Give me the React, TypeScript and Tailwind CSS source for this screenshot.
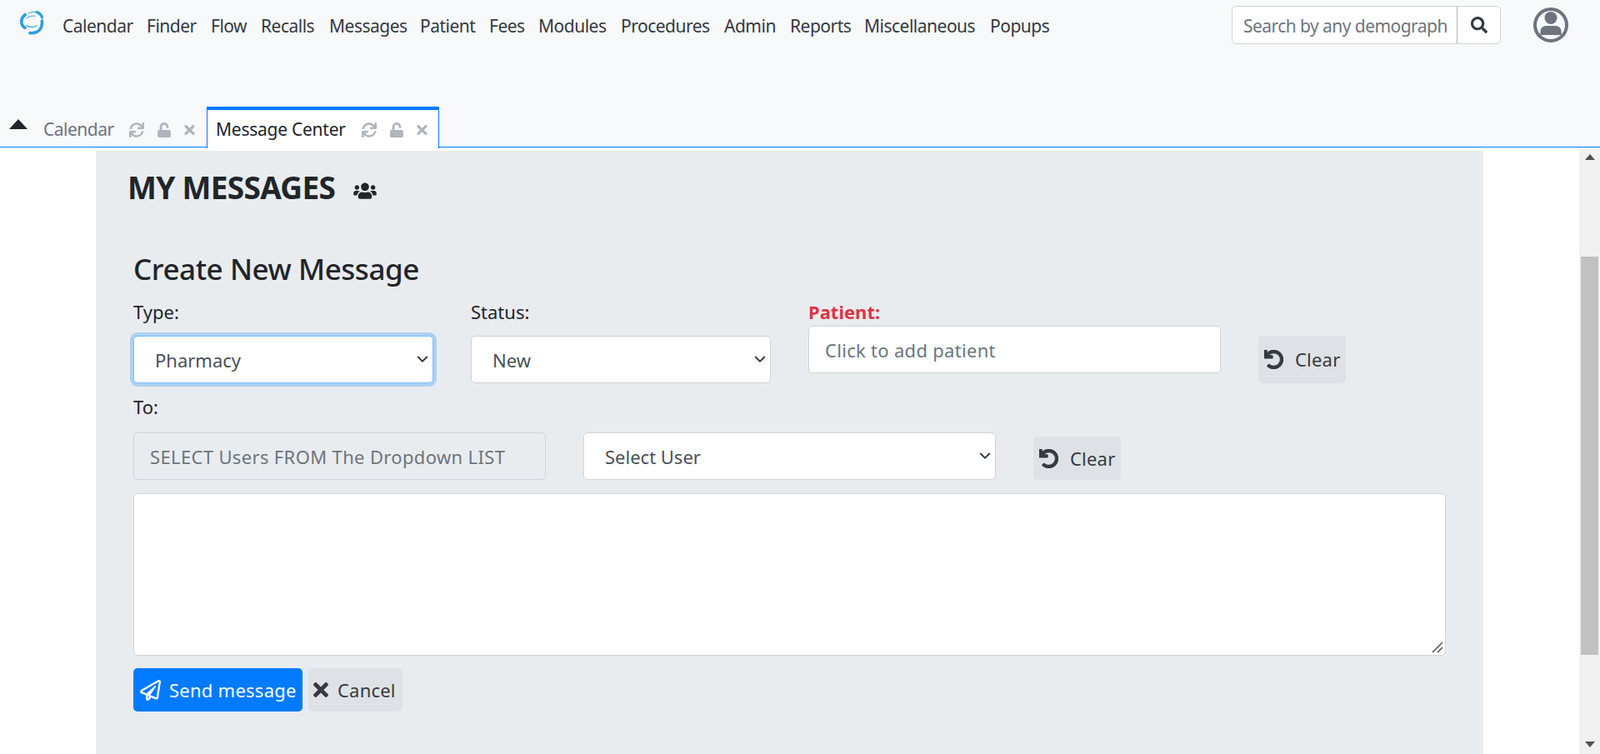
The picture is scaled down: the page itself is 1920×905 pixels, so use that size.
import React from "react";
import { FaSync, FaUnlock, FaTimes, FaUsers, FaSearch, FaRegPaperPlane, FaUndo } from "react-icons/fa";

const navItems = [
  ["Calendar", "w-[101px]"],
  ["Finder", "w-[77px]"],
  ["Flow", "w-[60px]"],
  ["Recalls", "w-[82px]"],
  ["Messages", "w-[109px]"],
  ["Patient", "w-[83px]"],
  ["Fees", "w-[59px]"],
  ["Modules", "w-[99px]"],
  ["Procedures", "w-[124px]"],
  ["Admin", "w-[79px]"],
  ["Reports", "w-[89px]"],
  ["Miscellaneous", "w-[151px]"],
  ["Popups", "w-[72px]"],
];

function TabIcons() {
  return (
    <div className="flex items-center text-[#adb5bd]">
      <FaSync className="w-[18px] h-[18px]" />
      <FaUnlock className="w-[18px] h-[18px] ml-[15px]" />
      <FaTimes className="w-[13px] h-[18px] ml-[15px]" />
    </div>
  );
}

function ClearButton({ extra }: { extra: string }) {
  return (
    <button className={`flex items-center gap-[14px] pl-[7px] w-[105px] rounded-[5px] bg-[#dee2e6] text-[#343a40] text-[22px] tracking-[0.2px] ${extra}`}>
      <FaUndo className="w-[23px] h-[23px] text-[#343a40]" stroke="currentColor" strokeWidth={24} />
      Clear
    </button>
  );
}

function Select({ label, width, focus }: { label: string; width: string; focus?: boolean }) {
  return (
    <div className={`relative ${width}`}>
      <select
        className={`block w-full h-[57px] pl-[25px] pr-[24px] pt-[2px] appearance-none bg-white rounded-[5px] border text-[22px] text-[#495057] outline-none ${
          focus ? "border-[#80bdff] shadow-[0_0_0_4px_rgba(0,123,255,0.25)]" : "border-[#ced4da]"
        }`}
      >
        <option>{label}</option>
      </select>
      <svg viewBox="0 0 14 8" className="absolute right-[6px] top-[24px] w-[14px] h-[8px] pointer-events-none" fill="none" stroke="#343a40" strokeWidth="2">
        <path d="M1.2 1 L7 6.6 L12.8 1" />
      </svg>
    </div>
  );
}

export default function App() {
  return (
    <div className="h-[905px] w-full overflow-hidden flex flex-col bg-white font-['Noto_Sans','Open_Sans',sans-serif] text-[#212529]">
      <header className="h-[177px] shrink-0 bg-[#f8f9fa] border-b border-[#007bff] flex flex-col justify-between">
        <div className="flex items-start pt-[7px] pl-[23px] pr-[38px]">
          <svg viewBox="0 0 32 32" className="w-[32px] h-[32px] mt-[4px] mr-[20px] shrink-0" fill="none" stroke="#2f9fd8" strokeLinecap="round">
            <path d="M7 6.7 C3.5 9.5 2.4 13.5 3 17 C3.5 19.5 5 21.5 7 22.3" strokeWidth="3.8" />
            <path d="M10.5 5 C13 3.8 16 3.2 19 3.2" strokeWidth="1" />
            <path d="M21 3.6 C24 4.4 26.6 6.8 27.6 10" strokeWidth="3.2" />
            <path d="M27.4 14 C27.8 19 26.4 23 24 25.5 C21.5 27.8 17 29 13 28.6" strokeWidth="3.6" />
            <path d="M9 19.5 C13 22.5 18 22 21 20" strokeWidth="1.2" />
            <path d="M8.7 11 C11 8.6 15 7.6 19 8.2" strokeWidth="1" />
          </svg>
          <nav className="flex items-center h-[50px] text-[21px] tracking-[-0.5px] text-[#343a40]">
            {navItems.map(([n, w]) => (
              <span key={n} className={`${w} whitespace-nowrap`}>{n}</span>
            ))}
          </nav>
          <div className="ml-auto flex items-center">
            <div className="flex h-[46px] w-[323px] rounded-[5px] border border-[#ced4da] bg-white overflow-hidden">
              <input placeholder="Search by any demographics" className="w-[269px] h-full pl-[13px] pr-[12px] pt-[2px] text-[21px] tracking-[-0.55px] placeholder:text-[#6c757d] outline-none" />
              <div className="flex-1 border-l border-[#adb5bd] flex items-center justify-center text-[#343a40]">
                <FaSearch className="w-[20px] h-[20px]" />
              </div>
            </div>
            <svg viewBox="0 0 42 42" className="w-[42px] h-[42px] ml-[39px]">
              <circle cx="21" cy="21" r="19" fill="#f8f9fa" stroke="#6c757d" strokeWidth="4" />
              <circle cx="21" cy="12.5" r="7.5" fill="#6c757d" />
              <path d="M8.5 29 C8.5 24 12 22 16 22 H26 C30 22 33.5 24 33.5 29 V33 H8.5 Z" fill="#6c757d" />
            </svg>
          </div>
        </div>
        <div className="flex items-end h-[50px] -mb-[1px]">
          <svg viewBox="0 0 22 12" className="w-[22px] h-[12px] ml-[11px] mb-[22px]">
            <path d="M11 0 L22 12 H0 Z" fill="#212529" />
          </svg>
          <div className="flex items-center h-[43px] ml-[19px] w-[196px] text-[#6c757d] text-[21px] tracking-[-0.5px]">
            <span className="w-[103px]">Calendar</span>
            <TabIcons />
          </div>
          <div className="flex items-center h-[50px] w-[279px] bg-white border-x border-b-0 border-[#007bff] border-t-[4px] pl-[10px] pt-[2px] text-[#212529] text-[21px] tracking-[-0.25px] -mb-[1px]">
            <span className="w-[175px] whitespace-nowrap">Message Center</span>
            <TabIcons />
          </div>
        </div>
      </header>

      <div className="flex flex-1 min-h-0">
        <main className="flex-1 pt-[4px] pl-[115px] min-w-0 overflow-hidden">
          <section className="w-[1665px] h-full bg-[#e9ecef]">
            <div className="flex items-center pl-[38px] pt-[4px] h-[84px]">
              <h1 className="text-[37px] font-bold leading-[48px] tracking-[-0.7px] text-[#212529]">MY MESSAGES</h1>
              <FaUsers className="w-[28px] h-[22px] ml-[22px] mt-[8px] text-[#212529]" />
            </div>
            <div className="px-[45px] pt-[35px]">
              <h2 className="text-[35px] font-medium leading-[48px] -tracking-[0.45px] text-[#212529] -mt-[1px]">Create New Message</h2>
              <div className="flex gap-[45px] mt-[13px]">
                <div className="w-[360px]">
                  <label className="block text-[22px] leading-[28px] mb-[15px]">Type:</label>
                  <Select label="Pharmacy" width="w-full" focus />
                </div>
                <div className="w-[360px]">
                  <label className="block text-[22px] leading-[28px] mb-[15px]">Status:</label>
                  <Select label="New" width="w-full" />
                </div>
                <div className="w-[495px]">
                  <label className="block text-[22px] font-bold text-[#dc3545] leading-[28px] mb-[3px]">Patient:</label>
                  <input placeholder="Click to add patient" className="block w-full h-[57px] pl-[19px] bg-white rounded-[5px] border border-[#ced4da] text-[22px] tracking-[0.3px] placeholder:text-[#6c757d] outline-none" />
                </div>
                <ClearButton extra="h-[57px] self-end" />
              </div>
              <label className="block text-[22px] leading-[28px] mt-[14px]">To:</label>
              <div className="flex gap-[45px] mt-[17px] items-end">
                <input disabled placeholder="SELECT Users FROM The Dropdown LIST" className="block w-[495px] h-[57px] pl-[19px] bg-[#e9ecef] rounded-[5px] border border-[#ced4da] text-[22px] tracking-[0.35px] placeholder:text-[#6c757d] outline-none" />
                <Select label="Select User" width="w-[495px]" />
                <ClearButton extra="h-[52px]" />
              </div>
              <div className="relative mt-[16px] w-[1575px]">
                <textarea className="block w-full h-[195px] bg-white rounded-[5px] border border-[#ced4da] outline-none resize-none" />
                <svg viewBox="0 0 14 14" className="absolute right-[3px] bottom-[3px] w-[14px] h-[14px] pointer-events-none" stroke="#444" strokeWidth="1.4">
                  <path d="M1 13 L13 1 M7 13 L13 7" />
                </svg>
              </div>
              <div className="flex gap-[7px] mt-[15px]">
                <button className="flex items-center gap-[10px] pl-[8px] w-[203px] h-[52px] rounded-[5px] bg-[#007bff] text-white text-[22px] tracking-[0.25px]">
                  <FaRegPaperPlane className="w-[25px] h-[25px]" />
                  Send message
                </button>
                <button className="flex items-center gap-[11px] pl-[6px] w-[113px] h-[52px] rounded-[5px] bg-[#dee2e6] text-[#343a40] text-[22px] tracking-[0.2px]">
                  <FaTimes className="w-[18px] h-[26px]" />
                  Cancel
                </button>
              </div>
            </div>
          </section>
        </main>
        <aside className="w-[25px] shrink-0 bg-[#f1f1f1] flex flex-col items-center justify-between py-[8px] relative">
          <svg viewBox="0 0 12 7" className="w-[12px] h-[7px]"><path d="M6 0 L12 7 H0 Z" fill="#505050" /></svg>
          <div className="absolute left-[2px] right-[2px] top-[131px] h-[478px] bg-[#c1c1c1]" />
          <svg viewBox="0 0 12 7" className="w-[12px] h-[7px]"><path d="M0 0 H12 L6 7 Z" fill="#505050" /></svg>
        </aside>
      </div>
    </div>
  );
}
